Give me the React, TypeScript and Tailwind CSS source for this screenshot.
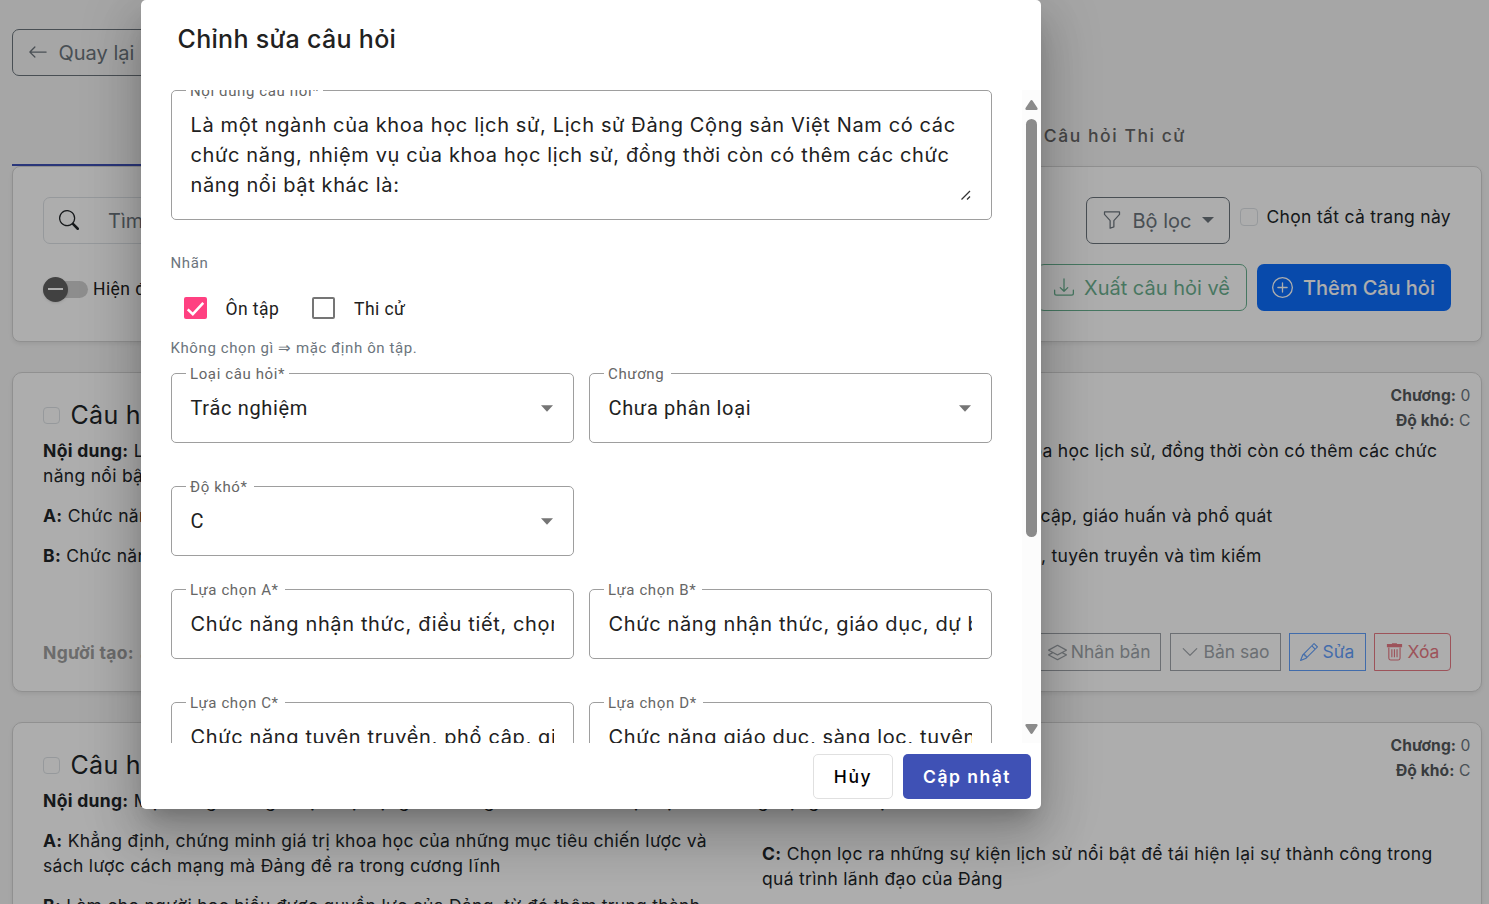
import { BsArrowLeft, BsSearch, BsFunnel, BsDownload, BsPlusCircle, BsLayers, BsChevronDown, BsPencil } from "react-icons/bs";
import type { ReactNode } from "react";

const inter = "font-['Inter',sans-serif]";
const roboto = "font-['Roboto',sans-serif]";

function Check({ className = "" }: { className?: string }) {
  return <span className={`block size-[17.5px] shrink-0 rounded-[4px] border border-[#dee2e6] bg-white ${className}`} />;
}

function TrashIcon() {
  return (
    <svg width="17" height="18" viewBox="0 0 15.1 16" fill="none" stroke="currentColor">
      <path d="M1.3 1.4h12.5v1.8h-12.5zM5.3 .7h4.4" fill="currentColor" strokeWidth="1" />
      <path d="M2.5 4v9.5A1.8 1.8 0 0 0 4.3 15.1h6.4A1.8 1.8 0 0 0 12.5 13.5V4M5.2 5.5v7.2M7.5 5.5v7.2M9.8 5.5v7.2" strokeWidth="1" />
    </svg>
  );
}

function Para({ label, children }: { label: string; children: ReactNode }) {
  return (
    <p className="mb-[15px] text-[17.5px] leading-[25px] tracking-[0.305px] text-[#212529]">
      <b className="font-bold">{label}</b> {children}
    </p>
  );
}

type Question = { title: string; content: string; a: string; b: string; c: string; d: string };

function QuestionCard({ q }: { q: Question }) {
  return (
    <section className="relative flex min-h-[320px] shrink-0 flex-col rounded-[10px] border border-[#d5d5d5] bg-white px-[30px] pt-[29px] shadow-[0_2px_4px_rgba(0,0,0,0.075)]">
      <div className="absolute top-[10px] right-[10.5px] text-right text-[15.6px] leading-[25px] tracking-[0.08px] text-[#6c757d]">
        <div><b className="text-[#55595c]">Chương:</b> 0</div>
        <div><b className="text-[#55595c]">Độ khó:</b> C</div>
      </div>
      <div className="flex h-[27px] items-center">
        <Check className="-ml-[0.5px]" />
        <h2 className="ml-[10.5px] text-[25px] leading-[27px] tracking-[0.3px] text-[#212529]">{q.title}</h2>
      </div>
      <div className="mt-[9px]"><Para label="Nội dung:">{q.content}</Para></div>
      <div className="grid grid-cols-[719px_1fr] items-center">
        <div className="w-[680px]">
          <Para label="A:">{q.a}</Para>
          <Para label="B:">{q.b}</Para>
        </div>
        <div className="w-[680px]">
          <Para label="C:">{q.c}</Para>
          <Para label="D:">{q.d}</Para>
        </div>
      </div>
      <div className="mt-auto mb-[20px] flex h-[38px] items-center justify-between text-[17.5px]">
        <div className="pt-[2px] font-bold tracking-[0.31px] text-[#a0a0a0]">Người tạo: <span className="ml-[2px] font-normal">admin</span></div>
        <div className="flex h-full gap-2 text-[#6c757d] opacity-65">
          <span className="flex items-center gap-1 border border-current pr-[9.5px] pl-[10px]"><BsLayers size={19} />Nhân bản</span>
          <span className="ml-px flex w-[111px] items-center gap-[4.5px] border border-current pl-[10px]"><BsChevronDown size={18} />Bản sao</span>
          <span className="flex w-[77px] items-center gap-[4.5px] border border-current pl-[10px] text-[#0d6efd]"><BsPencil size={18} />Sửa</span>
          <span className="flex w-[77px] items-center gap-[4.5px] rounded-r-[4px] border border-current pl-[11px] text-[#dc3545]"><TrashIcon />Xóa</span>
        </div>
      </div>
    </section>
  );
}

const questions: Question[] = [
  {
    title: "Câu hỏi 1",
    content: "Là một ngành của khoa học lịch sử, Lịch sử Đảng Cộng sản Việt Nam có các chức năng, nhiệm vụ của khoa học lịch sử, đồng thời còn có thêm các chức năng nổi bật khác là:",
    a: "Chức năng nhận thức, điều tiết, chọn lọc",
    b: "Chức năng nhận thức, giáo dục, dự báo",
    c: "Chức năng tuyên truyền, phổ cập, giáo huấn và phổ quát",
    d: "Chức năng giáo dục, sàng lọc, tuyên truyền và tìm kiếm",
  },
  {
    title: "Câu hỏi 2",
    content: "Một trong những nhiệm vụ trọng tâm hàng đầu của khoa học Lịch sử Đảng Cộng sản Việt Nam là:",
    a: "Khẳng định, chứng minh giá trị khoa học của những mục tiêu chiến lược và sách lược cách mạng mà Đảng đề ra trong cương lĩnh",
    b: "Làm cho người học hiểu được quyền lực của Đảng, từ đó thêm trung thành với sự nghiệp cách mạng",
    c: "Chọn lọc ra những sự kiện lịch sử nổi bật để tái hiện lại sự thành công trong quá trình lãnh đạo của Đảng",
    d: "Tuyên truyền đường lối của Đảng",
  },
];

function Outlined({ label, notch, className = "", children }: { label: string; notch: string; className?: string; children: ReactNode }) {
  return (
    <div className={`relative rounded-[5px] border border-[#9e9e9e] ${className}`}>
      <span className={`absolute -top-px left-[14px] h-px bg-white ${notch}`} />
      <span className={`absolute -top-[10px] left-[18px] text-[15px] leading-[20px] tracking-[0.62px] whitespace-nowrap text-[#666] ${roboto}`}>{label}</span>
      {children}
    </div>
  );
}

function SelectField({ label, notch, value }: { label: string; notch: string; value: string }) {
  return (
    <Outlined label={label} notch={notch} className="flex h-[70px] items-center justify-between pr-[20px] pl-[18.5px]">
      <span className={`text-[20px] tracking-[0.67px] text-[#212121] ${roboto}`}>{value}</span>
      <svg width="12" height="7" viewBox="0 0 13 7" className="fill-[#757575]"><path d="M0 0h13L6.5 7z" /></svg>
    </Outlined>
  );
}

function TextField({ label, notch, value }: { label: string; notch: string; value: string }) {
  return (
    <Outlined label={label} notch={notch} className="flex h-[70px] items-center pr-[19px] pl-[18.5px]">
      <span className="w-full overflow-hidden text-[20px] leading-[30px] tracking-[0.63px] whitespace-nowrap text-[#212121]">{value}</span>
    </Outlined>
  );
}

function Dialog() {
  return (
    <div className="absolute top-0 left-[141px] flex h-[809px] w-[900px] flex-col rounded-[5px] bg-white shadow-[0_14px_19px_-9px_rgba(0,0,0,0.2),0_30px_48px_4px_rgba(0,0,0,0.14),0_11px_58px_10px_rgba(0,0,0,0.12)]">
      <h1 className="h-[90px] pt-[19px] pl-[36.5px] text-[25px] leading-[40px] font-medium tracking-[0.3px] text-[#212121]">Chỉnh sửa câu hỏi</h1>
      <div className="flex h-[653px] overflow-hidden">
        <div className="w-[881px] shrink-0 pr-[30px] pl-[30px]">
          <Outlined label="Nội dung câu hỏi*" notch="w-[137px]" className="h-[130px] pt-[19px] pl-[18.5px]">
            <p className="w-[785px] text-[20px] leading-[30px] tracking-[0.63px] text-[#212121]">
              Là một ngành của khoa học lịch sử, Lịch sử Đảng Cộng sản Việt Nam có các<br />
              chức năng, nhiệm vụ của khoa học lịch sử, đồng thời còn có thêm các chức<br />
              năng nổi bật khác là:
            </p>
            <svg className="absolute right-[20.5px] bottom-[19.5px] stroke-[#333]" width="10" height="10" viewBox="0 0 10 10" strokeWidth="1.3"><path d="M.5 9.5L9 1M6 9.5L9 6.5" /></svg>
          </Outlined>
          <div className={`mt-[33px] -ml-[0.5px] text-[15px] leading-[20px] tracking-[0.62px] text-[#6c757d] ${roboto}`}>Nhãn</div>
          <div className={`mt-[10px] flex h-[50px] items-center pl-[13px] text-[17.5px] tracking-[0.44px] text-[#212121] ${roboto}`}>
            <span className="flex h-[22px] w-[23px] items-center justify-center rounded-[2px] bg-[#ff4081]">
              <svg width="19" height="19" viewBox="0 0 24 24" fill="none" stroke="#fff" strokeWidth="3.2"><path d="M2.2 13.2L8.6 19.2 21.8 5" /></svg>
            </span>
            <span className="ml-[18.5px] w-[86.5px] pt-[2px]">Ôn tập</span>
            <span className="h-[22px] w-[23px] rounded-[2px] border-2 border-[#757575]" />
            <span className="ml-[19px] pt-[2px]">Thi cử</span>
          </div>
          <div className={`mt-[5px] -ml-[0.5px] text-[15px] leading-[20px] tracking-[0.6px] text-[#6c757d] ${roboto}`}>Không chọn gì ⇒ mặc định ôn tập.</div>
          <div className="mt-[15px] grid grid-cols-2 gap-x-[15px] gap-y-[43px]">
            <SelectField label="Loại câu hỏi*" notch="w-[103px]" value="Trắc nghiệm" />
            <SelectField label="Chương" notch="w-[67px]" value="Chưa phân loại" />
            <SelectField label="Độ khó*" notch="w-[68px]" value="C" />
          </div>
          <div className="mt-[33px] grid grid-cols-2 gap-x-[15px] gap-y-[43px]">
            <TextField label="Lựa chọn A*" notch="w-[99px]" value="Chức năng nhận thức, điều tiết, chọn lọc" />
            <TextField label="Lựa chọn B*" notch="w-[98px]" value="Chức năng nhận thức, giáo dục, dự báo" />
            <TextField label="Lựa chọn C*" notch="w-[99px]" value="Chức năng tuyên truyền, phổ cập, giáo huấn" />
            <TextField label="Lựa chọn D*" notch="w-[99px]" value="Chức năng giáo dục, sàng lọc, tuyên truyền" />
          </div>
        </div>
        <div className="flex w-[19px] flex-col items-center bg-[#fcfcfc] pt-[10px] pb-[9px]">
          <svg width="13" height="10" viewBox="0 0 13 10" className="fill-[#8b8b8b]"><path d="M6.5 0Q7.2 0 7.8 1L12.6 8.3Q13 10 11.5 10H1.5Q0 10 .4 8.3L5.2 1Q5.8 0 6.5 0z" /></svg>
          <span className="mt-[9px] h-[418px] w-[11px] rounded-full bg-[#8b8b8b]" />
          <svg width="13" height="10" viewBox="0 0 13 10" className="mt-auto rotate-180 fill-[#8b8b8b]"><path d="M6.5 0Q7.2 0 7.8 1L12.6 8.3Q13 10 11.5 10H1.5Q0 10 .4 8.3L5.2 1Q5.8 0 6.5 0z" /></svg>
        </div>
      </div>
      <div className="flex justify-end gap-[10px] pt-[11px] pr-[10px] text-[17.5px] tracking-[1.56px]">
        <span className="flex h-[45px] w-[80px] items-center justify-center rounded-[5px] border border-[#e0e0e0] pt-[2px] font-medium text-black">Hủy</span>
        <span className="flex h-[45px] w-[128px] items-center justify-center rounded-[5px] bg-[#3f51b5] pt-[2px] font-semibold tracking-[1.5px] text-white">Cập nhật</span>
      </div>
    </div>
  );
}

export default function App() {
  return (
    <div className={`relative h-[904px] w-full overflow-hidden bg-[#f5f5f5] ${inter}`}>
      <main className="flex h-full flex-col overflow-hidden pr-[7px] pl-3">
        <div className="mt-[29px] flex h-[47px] w-[150px] shrink-0 items-center rounded-[7px] border border-[#6c757d] pl-[15px] text-[20px] whitespace-nowrap text-[#6c757d]">
          <BsArrowLeft size={20} className="-mt-px" /><span className="ml-[10.5px]">Quay lại</span>
        </div>
        <div className="mt-[29px] flex h-[61px] shrink-0 items-center justify-end pt-[2px] pr-[296px] text-[17.5px] font-medium tracking-[1.56px] text-[#666]">
          Câu hỏi Thi cử
        </div>
        <div className="-mt-[2px] h-[2px] w-[735px] shrink-0 bg-[#3f51b5]" />
        <section className="flex h-[176px] shrink-0 flex-col rounded-[8px] border border-[#d5d5d5] bg-white px-[30px] pt-[30px] shadow-[0_2px_4px_rgba(0,0,0,0.075)]">
          <div className="flex h-[47px] items-center">
            <div className="flex h-[47px] w-[600px] items-center rounded-[7px] border border-[#dee2e6] pl-[15px] text-[20px] text-[#6c757d]">
              <BsSearch size={20} className="-mt-px text-[#212529]" /><span className="ml-[29px]">Tìm kiếm</span>
            </div>
            <div className="ml-auto flex h-[47px] w-[144px] items-center rounded-[7px] border border-[#6c757d] pl-[15px] text-[20px] text-[#6c757d]">
              <BsFunnel size={20} className="-mt-px" /><span className="ml-[10.5px]">Bộ lọc</span>
              <svg width="12" height="6" viewBox="0 0 12 6" className="-mt-px ml-[10.5px] fill-current"><path d="M0 0h12L6 6z" /></svg>
            </div>
            <Check className="-mt-[7px] ml-[10px]" />
            <span className="-mt-[7px] ml-[9px] text-[17.5px] tracking-[0.31px] text-[#212529]">Chọn tất cả trang này</span>
          </div>
          <div className="mt-5 flex h-[47px] items-center">
            <span className="relative mt-[3px] block h-[17px] w-[45px] rounded-full bg-[#d0d0d0]">
              <span className="absolute -top-1 left-0 flex size-[25px] items-center justify-center rounded-full bg-[#616161] shadow"><span className="h-[2px] w-[15px] bg-white" /></span>
            </span>
            <span className={`mt-[4px] ml-[5px] text-[17.5px] tracking-[0.44px] text-[#212121] ${roboto}`}>Hiện đáp án</span>
            <div className="ml-auto flex h-[47px] w-[210px] items-center rounded-[7px] border border-[#198754] pl-[15.5px] text-[20px] text-[#198754] opacity-65">
              <BsDownload size={20} className="-mt-px" /><span className="ml-[10.5px]">Xuất câu hỏi về</span>
            </div>
            <div className="ml-[10px] flex h-[47px] w-[194px] items-center rounded-[7px] bg-[#0d6efd] pl-[15px] text-[20px] font-medium text-white">
              <BsPlusCircle size={21} className="-mt-px" /><span className="ml-[10px] tracking-[-0.05px]">Thêm Câu hỏi</span>
            </div>
          </div>
        </section>
        <div className="mt-[30px] flex flex-col gap-[30px]">
          {questions.map((q) => <QuestionCard key={q.title} q={q} />)}
        </div>
      </main>
      <div className="absolute inset-0 bg-black/32" />
      <Dialog />
    </div>
  );
}
